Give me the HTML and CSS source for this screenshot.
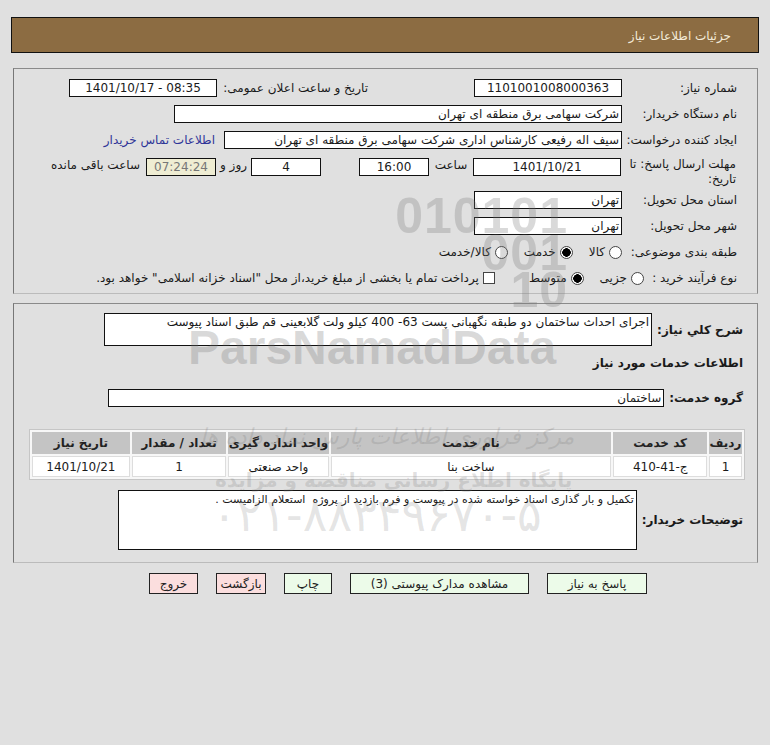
FILE: index.html
```html
<!DOCTYPE html>
<html lang="fa" dir="rtl">
<head>
  <meta charset="UTF-8">
  <title>جزئیات اطلاعات نیاز</title>
  <link rel="stylesheet" href="styles.css">
</head>
<body>
  <div class="page">
    <div class="title-bar">جزئیات اطلاعات نیاز</div>

    <div class="panel info">
      <div class="row">
        <span class="lbl">شماره نیاز:</span>
        <span class="box w148 center">1101001008000363</span>
        <span class="lbl lbl-announce">تاریخ و ساعت اعلان عمومی:</span>
        <span class="box w148 center" dir="ltr">1401/10/17 - 08:35</span>
      </div>
      <div class="row">
        <span class="lbl">نام دستگاه خریدار:</span>
        <span class="box w448">شرکت سهامی برق منطقه ای تهران</span>
      </div>
      <div class="row">
        <span class="lbl">ایجاد کننده درخواست:</span>
        <span class="box w398">سیف اله رفیعی کارشناس اداری شرکت سهامی برق منطقه ای تهران</span>
        <a class="contact" href="#">اطلاعات تماس خریدار</a>
      </div>
      <div class="row row-deadline">
        <span class="lbl lbl-wrap">مهلت ارسال پاسخ: تا تاریخ:</span>
        <span class="box w148 center">1401/10/21</span>
        <span class="unit w44">ساعت</span>
        <span class="box w70 center">16:00</span>
        <span class="box w70 center gap38">4</span>
        <span class="unit w35">روز و</span>
        <span class="box w70 center timer">07:24:24</span>
        <span class="unit tail">ساعت باقی مانده</span>
      </div>
      <div class="row">
        <span class="lbl">استان محل تحویل:</span>
        <span class="box w148">تهران</span>
      </div>
      <div class="row">
        <span class="lbl">شهر محل تحویل:</span>
        <span class="box w148">تهران</span>
      </div>
      <div class="row">
        <span class="lbl">طبقه بندی موضوعی:</span>
        <label class="opt"><input type="radio" name="cat"> کالا</label>
        <label class="opt"><input type="radio" name="cat" checked> خدمت</label>
        <label class="opt"><input type="radio" name="cat"> کالا/خدمت</label>
      </div>
      <div class="row">
        <span class="lbl lbl-short">نوع فرآیند خرید :</span>
        <label class="opt"><input type="radio" name="proc"> جزیی</label>
        <label class="opt"><input type="radio" name="proc" checked> متوسط</label>
        <label class="opt opt-check"><input type="checkbox"> پرداخت تمام یا بخشی از مبلغ خرید،از محل "اسناد خزانه اسلامی" خواهد بود.</label>
      </div>
    </div>

    <div class="panel details">
      <div class="row">
        <span class="lbl-b">شرح کلي نیاز:</span>
        <span class="box desc">اجرای احداث ساختمان دو طبقه نگهبانی پست 63- 400 کیلو ولت گلابعینی قم طبق اسناد پیوست</span>
      </div>
      <div class="section-title">اطلاعات خدمات مورد نیاز</div>
      <div class="row">
        <span class="lbl-b">گروه خدمت:</span>
        <span class="box group">ساختمان</span>
      </div>

      <table class="items">
        <tr>
          <th class="c1">ردیف</th>
          <th class="c2">کد خدمت</th>
          <th class="c3">نام خدمت</th>
          <th class="c4">واحد اندازه گیری</th>
          <th class="c5">تعداد / مقدار</th>
          <th class="c6">تاریخ نیاز</th>
        </tr>
        <tr>
          <td>1</td>
          <td>ج-41-410</td>
          <td>ساخت بنا</td>
          <td>واحد صنعتی</td>
          <td>1</td>
          <td>1401/10/21</td>
        </tr>
      </table>

      <div class="row row-notes">
        <span class="lbl-b">توضیحات خریدار:</span>
        <span class="box notes">تکمیل و بار گذاری اسناد خواسته شده در پیوست و فرم بازدید از پروژه &nbsp;استعلام الزامیست .</span>
      </div>
    </div>

    <div class="actions">
      <button class="btn btn-ok w100">پاسخ به نیاز</button>
      <button class="btn btn-ok w180">مشاهده مدارک پیوستی (3)</button>
      <button class="btn btn-ok w48">چاپ</button>
      <button class="btn btn-red w50">بازگشت</button>
      <button class="btn btn-red w49">خروج</button>
    </div>

    <!-- faded site stamp over the form -->
    <div class="stamp" aria-hidden="true">
      <div class="stamp-bits">010101<br>001<br>10</div>
      <div class="stamp-name">ParsNamadData</div>
      <div class="stamp-fa1">مرکز فراوری اطلاعات پارس نماد داده ها</div>
      <div class="stamp-fa2">پایگاه اطلاع رسانی مناقصه و مزایده</div>
      <div class="stamp-tel">۰۲۱-۸۸۳۴۹۶۷۰-۵</div>
    </div>
  </div>
</body>
</html>
```

FILE: styles.css
```css
body {
  margin: 0;
  background: #e0e0e0;
  font-family: Tahoma, "DejaVu Sans", sans-serif;
  font-size: 12px;
  color: #1a1a1a;
}
.page {
  position: relative;
  padding: 17px 12px 0 13px;
}
.title-bar {
  height: 34px;
  line-height: 36px;
  background: #8c6c42;
  border: 1px solid #111;
  color: #f3ead8;
  padding-right: 27px;
  margin-right: -1px;
  margin-left: -2px;
}
.panel {
  position: relative;
  z-index: 1;
  border: 1px solid #8a8a8a;
  border-bottom-color: #bbb;
  border-left-color: #777;
}
.info {
  margin-top: 15px;
  height: 218px;
  padding: 6px 20px 0 0;
}
.details {
  margin-top: 9px;
  height: 249px;
  padding: 9px 14px 0 0;
}
.row {
  display: flex;
  align-items: center;
  min-height: 26px;
}
.lbl {
  width: 115px;
  flex-shrink: 0;
}
.lbl-short {
  width: 93px;
}
.lbl-announce {
  width: 146px;
  margin-right: 106px;
  margin-left: 5px;
}
.lbl-wrap {
  line-height: 15px;
  padding-right: 1px;
  margin-top: -1px;
}
.row-deadline {
  box-sizing: border-box;
  min-height: 32px;
  padding-top: 5px;
  align-items: flex-start;
}
.box {
  box-sizing: border-box;
  height: 18px;
  line-height: 16px;
  border: 1px solid #111;
  background: #fff;
  padding: 0 2px;
  white-space: nowrap;
  overflow: hidden;
  flex-shrink: 0;
}
.center { text-align: center; }
.w70 { width: 70px; }
.w148 { width: 148px; }
.w398 { width: 398px; }
.w448 { width: 448px; }
.gap38 { margin-right: 38px; }
.timer {
  background: #efedd3;
  color: #777;
}
.unit { flex-shrink: 0; }
.w44 { width: 44px; text-align: center; }
.w35 { width: 35px; text-align: center; }
.tail { margin-right: 6px; }
.contact {
  color: #2f3598;
  text-decoration: none;
  margin-right: 9px;
}
.opt {
  display: flex;
  align-items: center;
  gap: 4px;
  margin-left: 16px;
}
.opt-check { margin-right: 18px; }
.opt input {
  appearance: none;
  -webkit-appearance: none;
  margin: 0;
  width: 13px;
  height: 13px;
  border: 1px solid #444;
  border-radius: 50%;
  background: #fff;
}
.opt input:checked {
  background: radial-gradient(circle, #000 0 4px, #fff 4.5px);
}
.opt input[type="checkbox"] {
  border-radius: 0;
  width: 12px;
  height: 12px;
}
.lbl-b {
  font-weight: bold;
  font-size: 12px;
  white-space: nowrap;
  flex-shrink: 0;
  margin-left: 5px;
}
.desc {
  flex: 1;
  height: 33px;
  line-height: 16px;
  margin-left: 90px;
  white-space: normal;
}
.group {
  flex: 1;
  margin-left: 94px;
}
.section-title {
  font-weight: bold;
  font-size: 12px;
  line-height: 16px;
  margin: 9px 0 14px;
}
.items {
  margin: 18px -2px 0 0;
  width: 716px;
  border: 1px solid #c6c6c6;
  border-spacing: 2px;
  background: #f7f7f7;
  text-align: center;
}
.items th {
  background: #c4c4c4;
  height: 22px;
  font-weight: bold;
  color: #222;
  padding: 0;
}
.items td {
  background: #fff;
  border: 1px solid #ddd;
  height: 19px;
  padding: 0;
}
.c1 { width: 33px; }
.c2 { width: 94px; }
.c3 { width: 283px; }
.c4 { width: 101px; }
.c5 { width: 95px; }
.c6 { width: 98px; }
.row-notes { margin-top: 10px; }
.notes {
  flex: 1;
  margin-left: 104px;
  height: 60px;
  font-size: 11px;
  line-height: 15px;
  padding: 1px 2px;
  white-space: normal;
}
.actions {
  display: flex;
  gap: 18px;
  padding: 10px 111px 0 0;
  position: relative;
  z-index: 1;
}
.btn {
  height: 21px;
  border: 1px solid #222;
  font-family: inherit;
  font-size: 12px;
  padding: 0;
  color: #222;
}
.btn-ok { background: #ecfbe9; }
.btn-red { background: #fbdede; }
.w100 { width: 100px; }
.w180 { width: 179px; }
.w48 { width: 48px; }
.w50 { width: 50px; }
.w49 { width: 49px; }
.stamp {
  position: absolute;
  inset: 0;
  z-index: 2;
  pointer-events: none;
  color: rgba(120, 120, 120, 0.28);
  font-family: "Liberation Sans", Arial, sans-serif;
  font-weight: bold;
}
.stamp-bits {
  position: absolute;
  top: 198px;
  left: 380px;
  width: 188px;
  text-align: right;
  font-size: 50px;
  line-height: 37px;
  letter-spacing: 1px;
}
.stamp-name {
  position: absolute;
  top: 320px;
  left: 188px;
  font-size: 48px;
}
.stamp-fa1 {
  position: absolute;
  top: 424px;
  left: 200px;
  font-family: "DejaVu Sans", sans-serif;
  font-weight: normal;
  font-size: 22px;
  font-style: italic;
  color: rgba(120, 120, 120, 0.22);
}
.stamp-fa2 {
  position: absolute;
  top: 468px;
  left: 215px;
  font-family: "DejaVu Sans", sans-serif;
  font-size: 20px;
  color: rgba(120, 120, 120, 0.22);
}
.stamp-tel {
  position: absolute;
  top: 488px;
  left: 212px;
  font-family: "DejaVu Sans", sans-serif;
  font-weight: normal;
  font-size: 46px;
  color: rgba(120, 120, 120, 0.2);
}
```
